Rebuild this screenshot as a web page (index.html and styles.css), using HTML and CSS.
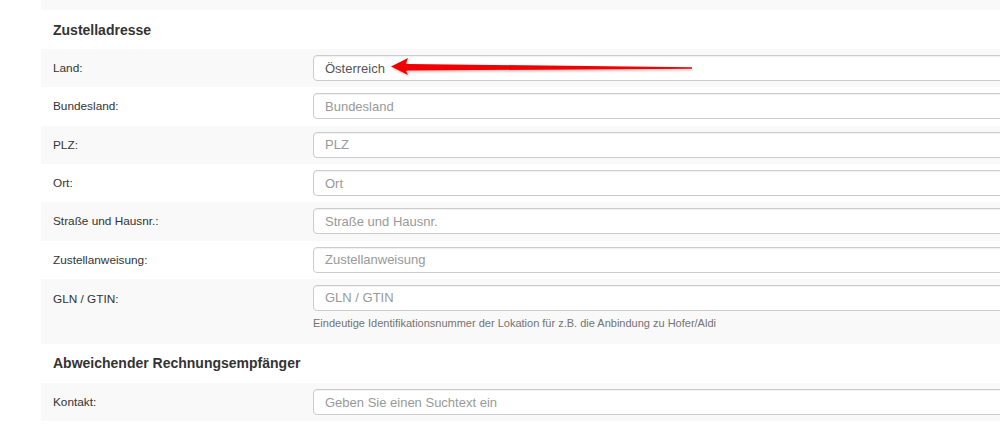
FILE: index.html
```html
<!DOCTYPE html>
<html lang="de">
<head>
<meta charset="utf-8">
<title>Zustelladresse</title>
<link rel="stylesheet" href="styles.css">
</head>
<body>
<div class="page">
  <div class="strip"></div>
  <h2 class="section-title">Zustelladresse</h2>
  <div class="row alt">
    <label class="label">Land:</label>
    <div class="field"><input class="input" type="text" value="Österreich"></div>
  </div>
  <div class="row">
    <label class="label">Bundesland:</label>
    <div class="field"><input class="input" type="text" placeholder="Bundesland"></div>
  </div>
  <div class="row alt">
    <label class="label">PLZ:</label>
    <div class="field"><input class="input" type="text" placeholder="PLZ"></div>
  </div>
  <div class="row">
    <label class="label">Ort:</label>
    <div class="field"><input class="input" type="text" placeholder="Ort"></div>
  </div>
  <div class="row alt">
    <label class="label">Straße und Hausnr.:</label>
    <div class="field"><input class="input" type="text" placeholder="Straße und Hausnr."></div>
  </div>
  <div class="row">
    <label class="label">Zustellanweisung:</label>
    <div class="field"><input class="input" type="text" placeholder="Zustellanweisung"></div>
  </div>
  <div class="row alt tall">
    <label class="label">GLN / GTIN:</label>
    <div class="field">
      <input class="input" type="text" placeholder="GLN / GTIN">
      <p class="help">Eindeutige Identifikationsnummer der Lokation für z.B. die Anbindung zu Hofer/Aldi</p>
    </div>
  </div>
  <h2 class="section-title">Abweichender Rechnungsempfänger</h2>
  <div class="row alt">
    <label class="label">Kontakt:</label>
    <div class="field"><input class="input" type="text" placeholder="Geben Sie einen Suchtext ein"></div>
  </div>
  <svg class="arrow" width="320" height="30" viewBox="0 0 320 30" aria-hidden="true">
    <defs>
      <filter id="sh" x="-10%" y="-50%" width="120%" height="200%">
        <feDropShadow dx="1" dy="1.5" stdDeviation="1.2" flood-color="#000" flood-opacity="0.25"/>
      </filter>
    </defs>
    <g filter="url(#sh)" fill="#f00000">
      <path d="M1 12.5 L18 4 L16 9.5 L18 10 L302 13.2 L302 14.8 L18 16.5 L16 17 L18 21 Z"/>
    </g>
  </svg>
</div>
</body>
</html>
```
FILE: styles.css
```css
html, body {
  margin: 0;
  padding: 0;
  background: #ffffff;
  overflow: hidden;
}
.page {
  position: relative;
  margin-left: 41px;
  width: 1100px;
  font-family: "Liberation Sans", Arial, sans-serif;
  color: #333333;
}
.strip {
  height: 10px;
  background: #f9f9f9;
}
.section-title {
  margin: 0;
  height: 39px;
  display: flex;
  align-items: center;
  padding-left: 12px;
  font-size: 14px;
  font-weight: bold;
  color: #333333;
}
.row {
  display: flex;
  align-items: center;
  height: 38.33px;
  padding-left: 12px;
  box-sizing: border-box;
}
.row.alt {
  background: #f9f9f9;
}
.row.tall {
  height: 65px;
  align-items: flex-start;
  padding-top: 6px;
}
.label {
  width: 260px;
  flex: none;
  font-size: 11.8px;
  color: #333333;
}
.row.tall .label {
  padding-top: 7px;
}
.field {
  flex: none;
  width: 760px;
}
.input {
  display: block;
  box-sizing: border-box;
  width: 100%;
  height: 26px;
  margin: 0;
  padding: 0 11px;
  border: 1px solid #cccccc;
  border-radius: 4px;
  background: #ffffff;
  box-shadow: inset 0 1px 1px rgba(0, 0, 0, 0.06);
  font-family: "Liberation Sans", Arial, sans-serif;
  font-size: 13px;
  color: #555555;
  outline: none;
}
.input::placeholder {
  color: #999999;
  opacity: 1;
}
.help {
  margin: 5px 0 0;
  font-size: 11px;
  line-height: 14px;
  color: #737373;
}
.arrow {
  position: absolute;
  left: 349px;
  top: 54px;
}
```
